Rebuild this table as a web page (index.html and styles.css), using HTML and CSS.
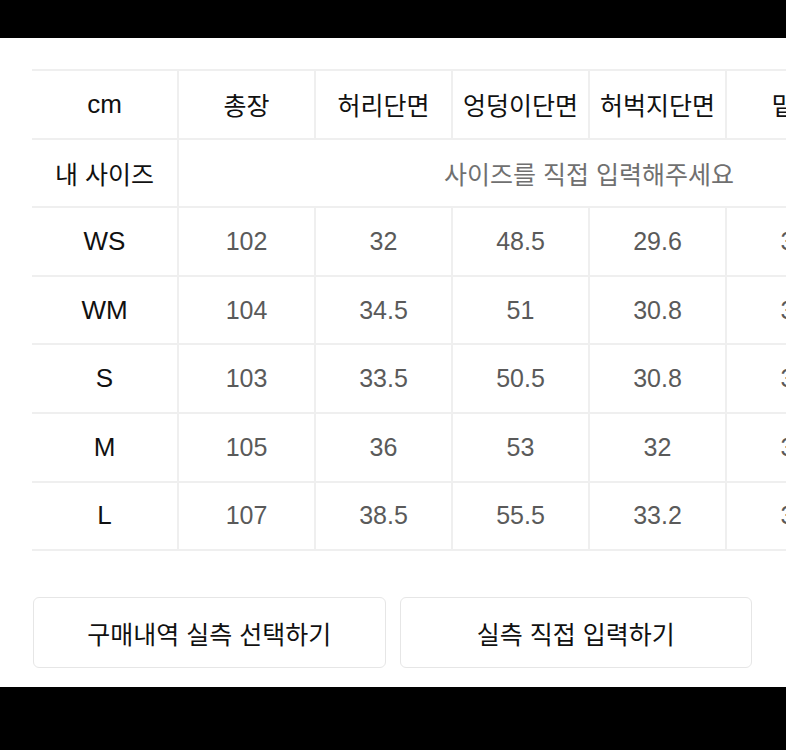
FILE: index.html
```html
<!DOCTYPE html>
<html lang="ko">
<head>
<meta charset="utf-8">
<link rel="stylesheet" href="styles.css">
</head>
<body>
<div class="sheet">
  <div class="table-wrap">
    <table class="size-table">
      <colgroup>
        <col class="c-label"><col class="c-data"><col class="c-data"><col class="c-data"><col class="c-data"><col class="c-data"><col class="c-data">
      </colgroup>
      <thead>
        <tr>
          <th>cm</th><th>총장</th><th>허리단면</th><th>엉덩이단면</th><th>허벅지단면</th><th>밑위</th><th>밑단단면</th>
        </tr>
      </thead>
      <tbody>
        <tr class="mine">
          <th>내 사이즈</th>
          <td colspan="6" class="hint">사이즈를 직접 입력해주세요</td>
        </tr>
        <tr><th>WS</th><td>102</td><td>32</td><td>48.5</td><td>29.6</td><td>30</td><td>19</td></tr>
        <tr><th>WM</th><td>104</td><td>34.5</td><td>51</td><td>30.8</td><td>31</td><td>20</td></tr>
        <tr><th>S</th><td>103</td><td>33.5</td><td>50.5</td><td>30.8</td><td>31</td><td>20</td></tr>
        <tr><th>M</th><td>105</td><td>36</td><td>53</td><td>32</td><td>32</td><td>21</td></tr>
        <tr><th>L</th><td>107</td><td>38.5</td><td>55.5</td><td>33.2</td><td>33</td><td>22</td></tr>
      </tbody>
    </table>
  </div>
  <div class="actions">
    <button class="btn" type="button">구매내역 실측 선택하기</button>
    <button class="btn" type="button">실측 직접 입력하기</button>
  </div>
</div>
</body>
</html>
```

FILE: styles.css
```css
html, body {
  margin: 0;
  padding: 0;
  background: #000;
}
body {
  font-family: "Liberation Sans", "Noto Sans CJK KR", sans-serif;
  width: 786px;
  height: 750px;
  overflow: hidden;
}
.sheet {
  margin-top: 38px;
  height: 649px;
  background: #fff;
  overflow: hidden;
}
.table-wrap {
  padding: 31px 0 0 32px;
  overflow: hidden;
}
.size-table {
  border-collapse: collapse;
  table-layout: fixed;
  width: 968px;
}
.c-label { width: 146px; }
.c-data { width: 137px; }
.size-table th,
.size-table td {
  height: 66.6px;
  padding: 0;
  text-align: center;
  vertical-align: middle;
  border: 2px solid #efefef;
  font-size: 25px;
  font-weight: 400;
  white-space: nowrap;
}
.size-table th {
  color: #111;
}
.size-table thead th:first-child,
.size-table tbody th {
  font-size: 26px;
}
.size-table .mine th {
  font-size: 25px;
}
.size-table td {
  color: #5a5a5a;
}
.size-table tr > :first-child {
  border-left: none;
}
.size-table .hint {
  color: #707070;
  font-size: 25px;
}
.actions {
  display: flex;
  gap: 14px;
  margin: 46px 34px 0 33px;
}
.btn {
  flex: 1;
  height: 71px;
  background: #fff;
  border: 1.5px solid #e6e6e6;
  border-radius: 6px;
  font-family: "Liberation Sans", "Noto Sans CJK KR", sans-serif;
  font-size: 25px;
  font-weight: 400;
  color: #111;
  padding: 0;
}
```
